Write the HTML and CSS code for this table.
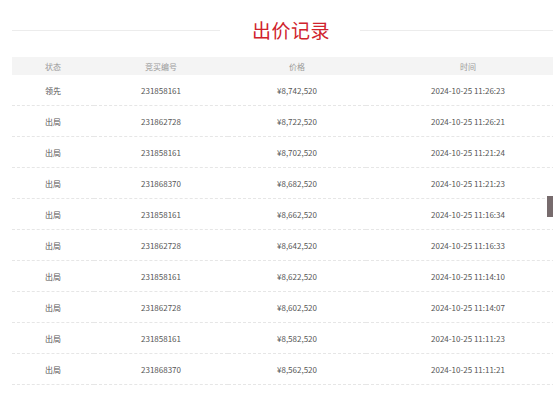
FILE: index.html
```html
<!DOCTYPE html>
<html lang="zh-CN">
<head>
<meta charset="utf-8">
<title>出价记录</title>
<link rel="stylesheet" href="styles.css">
</head>
<body>
<div class="page">
  <div class="title-row">
    <span class="rule rule-left"></span>
    <h2 class="title">出价记录</h2>
    <span class="rule rule-right"></span>
  </div>
  <table class="bids">
    <colgroup>
      <col class="c1"><col class="c2"><col class="c3"><col class="c4">
    </colgroup>
    <thead>
      <tr><th>状态</th><th>竞买编号</th><th>价格</th><th>时间</th></tr>
    </thead>
    <tbody>
      <tr><td>领先</td><td>231858161</td><td>¥8,742,520</td><td>2024-10-25 11:26:23</td></tr>
      <tr><td>出局</td><td>231862728</td><td>¥8,722,520</td><td>2024-10-25 11:26:21</td></tr>
      <tr><td>出局</td><td>231858161</td><td>¥8,702,520</td><td>2024-10-25 11:21:24</td></tr>
      <tr><td>出局</td><td>231868370</td><td>¥8,682,520</td><td>2024-10-25 11:21:23</td></tr>
      <tr><td>出局</td><td>231858161</td><td>¥8,662,520</td><td>2024-10-25 11:16:34</td></tr>
      <tr><td>出局</td><td>231862728</td><td>¥8,642,520</td><td>2024-10-25 11:16:33</td></tr>
      <tr><td>出局</td><td>231858161</td><td>¥8,622,520</td><td>2024-10-25 11:14:10</td></tr>
      <tr><td>出局</td><td>231862728</td><td>¥8,602,520</td><td>2024-10-25 11:14:07</td></tr>
      <tr><td>出局</td><td>231858161</td><td>¥8,582,520</td><td>2024-10-25 11:11:23</td></tr>
      <tr><td>出局</td><td>231868370</td><td>¥8,562,520</td><td>2024-10-25 11:11:21</td></tr>
    </tbody>
  </table>
</div>
<div class="side-tab"></div>
</body>
</html>
```

FILE: styles.css
```css
html, body {
  margin: 0;
  padding: 0;
  background: #fff;
  overflow: hidden;
  font-family: "Noto Sans CJK SC", "Noto Sans", sans-serif;
}

.page {
  width: 558px;
  margin-left: 12px;
}

.title-row {
  display: flex;
  align-items: center;
  height: 40px;
  margin-top: 10px;
}

.rule {
  display: block;
  height: 1px;
  background: #ececec;
}

.rule-left { width: 208px; }
.rule-right { flex: 1; }

.title {
  margin: 0 30px 0 32px;
  font-size: 19px;
  font-weight: normal;
  line-height: 40px;
  color: #d0232d;
  letter-spacing: 0.5px;
}

.bids {
  width: 558px;
  margin-top: 7px;
  border-collapse: collapse;
  table-layout: fixed;
  font-size: 8px;
}

.c1 { width: 82px; }
.c2 { width: 134px; }
.c3 { width: 138px; }
.c4 { width: 204px; }

.bids th {
  height: 18px;
  padding: 0;
  background: #f4f4f4;
  color: #9a9a9a;
  font-weight: normal;
  text-align: center;
}

.bids td {
  height: 30px;
  padding: 0;
  text-align: center;
  color: #555;
  border-bottom: 1px dashed #e6e6e6;
}

.side-tab {
  position: fixed;
  right: 0;
  top: 196px;
  width: 6px;
  height: 21px;
  background: #776b6d;
}
```
